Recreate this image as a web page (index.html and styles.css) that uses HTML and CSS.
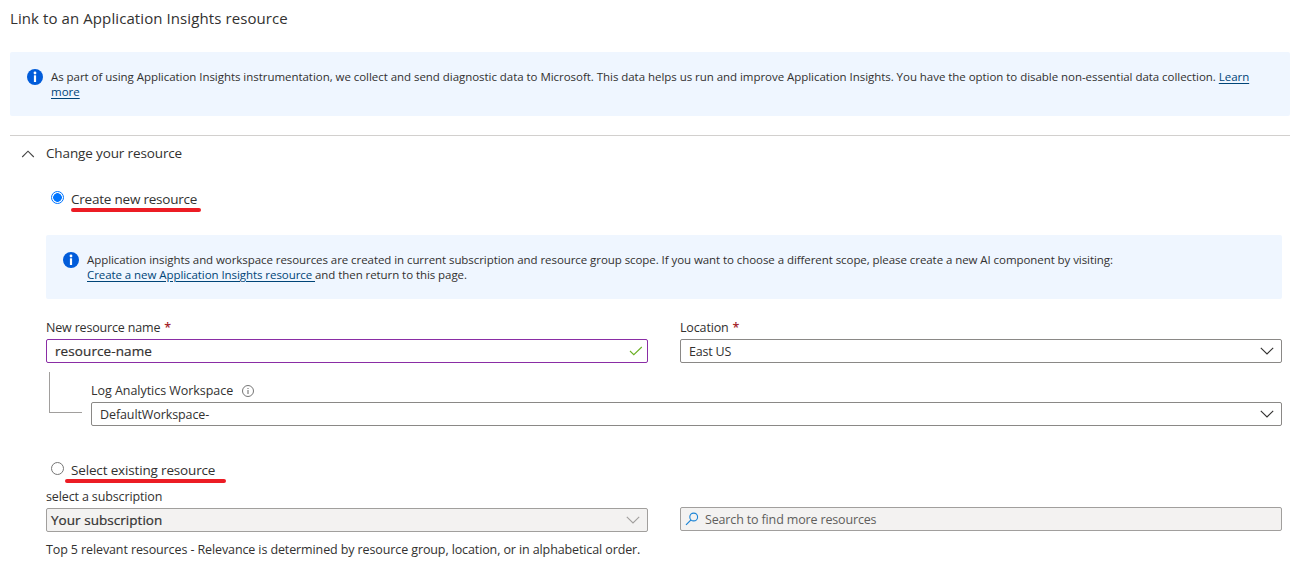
FILE: index.html
```html
<!DOCTYPE html>
<html lang="en">
<head>
<meta charset="utf-8">
<title>Link to an Application Insights resource</title>
<link rel="stylesheet" href="styles.css">
</head>
<body>
<main class="page">
  <h1 class="title"><span class="t-title">Link to an Application Insights resource</span></h1>
  <div class="banner">
    <svg class="info" viewBox="0 0 16 16"><circle cx="8" cy="8" r="8" fill="#015cda"/><circle cx="8" cy="4" r="1.4" fill="#fff"/><path d="M6.900 6.3h2.200v6.700H6.900z" fill="#fff"/></svg>
    <p class="banner-text"><span class="t-b1">As part of using Application Insights instrumentation, we collect and send diagnostic data to Microsoft. This data helps us run and improve Application Insights. You have the option to disable non-essential data collection. <a class="link">Learn</a></span><br><a class="link t-more">more</a></p>
  </div>
  <section class="section">
    <div class="section-head">
      <svg class="collapse" viewBox="0 0 14 8"><path d="M1.2 7 7 1.2 12.800 7" fill="none" stroke="#444" stroke-width="1.1"/></svg>
      <span class="t-head">Change your resource</span>
    </div>
    <div class="body">
      <div class="radio-row">
        <span class="radio checked"></span>
        <span class="radio-label t-create">Create new resource<i class="mark mark-create"></i></span>
      </div>
      <div class="banner banner-inner">
        <svg class="info" viewBox="0 0 16 16"><circle cx="8" cy="8" r="8" fill="#015cda"/><circle cx="8" cy="4" r="1.4" fill="#fff"/><path d="M6.900 6.3h2.200v6.700H6.900z" fill="#fff"/></svg>
        <p class="banner-text"><span class="t-b2">Application insights and workspace resources are created in current subscription and resource group scope. If you want to choose a different scope, please create a new AI component by visiting:</span><br><span class="t-b3"><a class="link">Create a new Application Insights resource </a>and then return to this page.</span></p>
      </div>
      <div class="columns fields">
        <div>
          <div class="label"><span class="t-name">New resource name</span> <b class="req">*</b></div>
          <div class="control active"><span class="strong t-value">resource-name</span>
            <svg class="check" viewBox="0 0 14 10"><path d="M1 5 4.800 8.700 12.800 1" fill="none" stroke="#6bb024" stroke-width="1.1"/></svg></div>
        </div>
        <div>
          <div class="label"><span class="t-loc">Location</span> <b class="req">*</b></div>
          <div class="control"><span class="t-east">East US</span>
            <svg class="chevron" viewBox="0 0 14 8"><path d="M.8.8 7 7 13.200.8" fill="none" stroke="#323130" stroke-width="1.1"/></svg></div>
        </div>
      </div>
      <div class="nested">
        <span class="elbow"></span>
        <div class="nested-field">
          <div class="label"><span class="t-log">Log Analytics Workspace</span>
            <svg class="hint" viewBox="0 0 12 12"><circle cx="6" cy="6" r="5.500" fill="none" stroke="#666" stroke-width=".9"/><path d="M5.500 5h1v4h-1zM5.500 3h1v1.100h-1z" fill="#666"/></svg></div>
          <div class="control"><span class="t-ws">DefaultWorkspace-</span>
            <svg class="chevron" viewBox="0 0 14 8"><path d="M.8.8 7 7 13.200.8" fill="none" stroke="#323130" stroke-width="1.1"/></svg></div>
        </div>
      </div>
      <div class="radio-row second">
        <span class="radio"></span>
        <span class="radio-label t-select">Select existing resource<i class="mark mark-select"></i></span>
      </div>
      <div class="columns existing">
        <div>
          <div class="label"><span class="t-sub">select a subscription</span></div>
          <div class="control disabled"><span class="strong t-yours">Your subscription</span>
            <svg class="chevron" viewBox="0 0 14 8"><path d="M.8.8 7 7 13.200.8" fill="none" stroke="#a19f9d" stroke-width="1.1"/></svg></div>
        </div>
        <div class="control disabled search">
          <svg class="lens" viewBox="0 0 14 14"><circle cx="8.700" cy="5" r="3.900" fill="none" stroke="#1b84d6" stroke-width="1.1"/><path d="M6 7.800 1 12.800" stroke="#1b84d6" stroke-width="1.200"/></svg>
          <span class="t-search">Search to find more resources</span></div>
      </div>
      <p class="caption"><span class="t-cap">Top 5 relevant resources - Relevance is determined by resource group, location, or in alphabetical order.</span></p>
    </div>
  </section>
</main>
</body>
</html>
```
FILE: styles.css
```css
* { box-sizing: border-box; }
body { margin: 0; background: #fff; color: #323130; font: 12.5px/16px "Open Sans", "Noto Sans", sans-serif; }
.page { padding: 8px 24px 0 10px; height: 567px; overflow: hidden; white-space: nowrap; }
.title { margin: 0; font-size: 15px; line-height: 20px; font-weight: 400; }
.banner { display: flex; margin-top: 24px; height: 64px; padding: 17px 17px 0; background: #eff6ff; border-radius: 2px; }
.info { width: 16px; height: 16px; flex: none; margin-right: 8px; }
.banner-text { margin: 0; font-size: 11.5px; line-height: 15px; }
.link { color: #004578; text-decoration: underline; text-underline-offset: 2px; }
.section { margin-top: 19px; border-top: 1px solid #d2d0ce; }
.section-head { display: flex; align-items: center; height: 36px; padding-left: 11px; font-size: 13.5px; }
.section-head span { padding-bottom: 2px; }
.collapse { width: 14px; height: 8px; margin-right: 11px; }
.body { padding: 0 8px 0 36px; }
.radio-row { display: flex; align-items: center; height: 18px; margin-top: 18px; padding-left: 5px; font-size: 13.5px; }
.radio { width: 13px; height: 13px; margin: -3px 7px 0 0; border: 1px solid #767676; border-radius: 50%; }
.checked { border-color: #0075ff; background: radial-gradient(circle, #0075ff 0 4px, #fff 4.600px); }
.radio-label { position: relative; }
.mark { position: absolute; height: 4px; border-radius: 2px; background: #ec1c24; }
.mark-create { left: 0; top: 17px; width: 130px; }
.mark-select { left: -6px; top: 17px; width: 161px; }
.banner-inner { margin-top: 27px; }
.columns { display: grid; grid-template-columns: 602px 602px; column-gap: 32px; }
.fields { margin-top: 20px; }
.label { display: flex; align-items: center; height: 20px; padding-bottom: 2px; }
.req { margin-left: 4px; color: #a4262c; font-weight: 600; }
.control { display: flex; align-items: center; height: 24px; padding: 0 7px 0 8px; border: 1px solid #8a8886; border-radius: 2px; }
.control .chevron, .control .check { margin-left: auto; flex: none; }
.control span { padding-top: 2px; }
.active { border-color: #8a2da5; padding-right: 4px; }
.control .strong { padding: 0 0 1px; font-size: 13.5px; font-weight: 500; -webkit-text-stroke: .2px #323130; }
.chevron { width: 14px; height: 8px; }
.check { width: 14px; height: 10px; }
.nested { display: flex; margin-top: 9px; padding-left: 3px; height: 54px; }
.elbow { width: 33px; height: 41px; margin-right: 9px; border: solid #a19f9d; border-width: 0 0 1px 1px; }
.nested-field { flex: 1; padding-top: 10px; }
.hint { width: 12px; height: 12px; margin-left: 9px; }
.second { margin-top: 35px; }
.existing { margin-top: 9px; }
.disabled { background: #f3f2f1; border-color: #a19f9d; }
.disabled .strong { margin-left: -4px; }
.search { margin-top: 19px; padding-left: 4px; color: #605e5c; }
.lens { width: 14px; height: 14px; margin-right: 6px; }
.caption { margin: 10px 0 0; }

/* tracking per text run */
.t-title { letter-spacing: .09px; }
.t-b1 { letter-spacing: -.042px; }
.t-b2, .t-b3 { letter-spacing: -.067px; }
.t-head { letter-spacing: -.13px; }
.t-create { letter-spacing: -.22px; }
.t-select { letter-spacing: -.16px; }
.t-name { letter-spacing: -.17px; }
.t-loc { letter-spacing: -.15px; }
.t-east { letter-spacing: -.2px; }
.t-log { letter-spacing: -.04px; }
.t-ws { letter-spacing: -.1px; }
.t-sub { letter-spacing: -.13px; }
.t-search { letter-spacing: -.15px; }
.t-cap { letter-spacing: -.11px; }
.t-value { letter-spacing: .1px; }
.t-yours { letter-spacing: .04px; }
```
